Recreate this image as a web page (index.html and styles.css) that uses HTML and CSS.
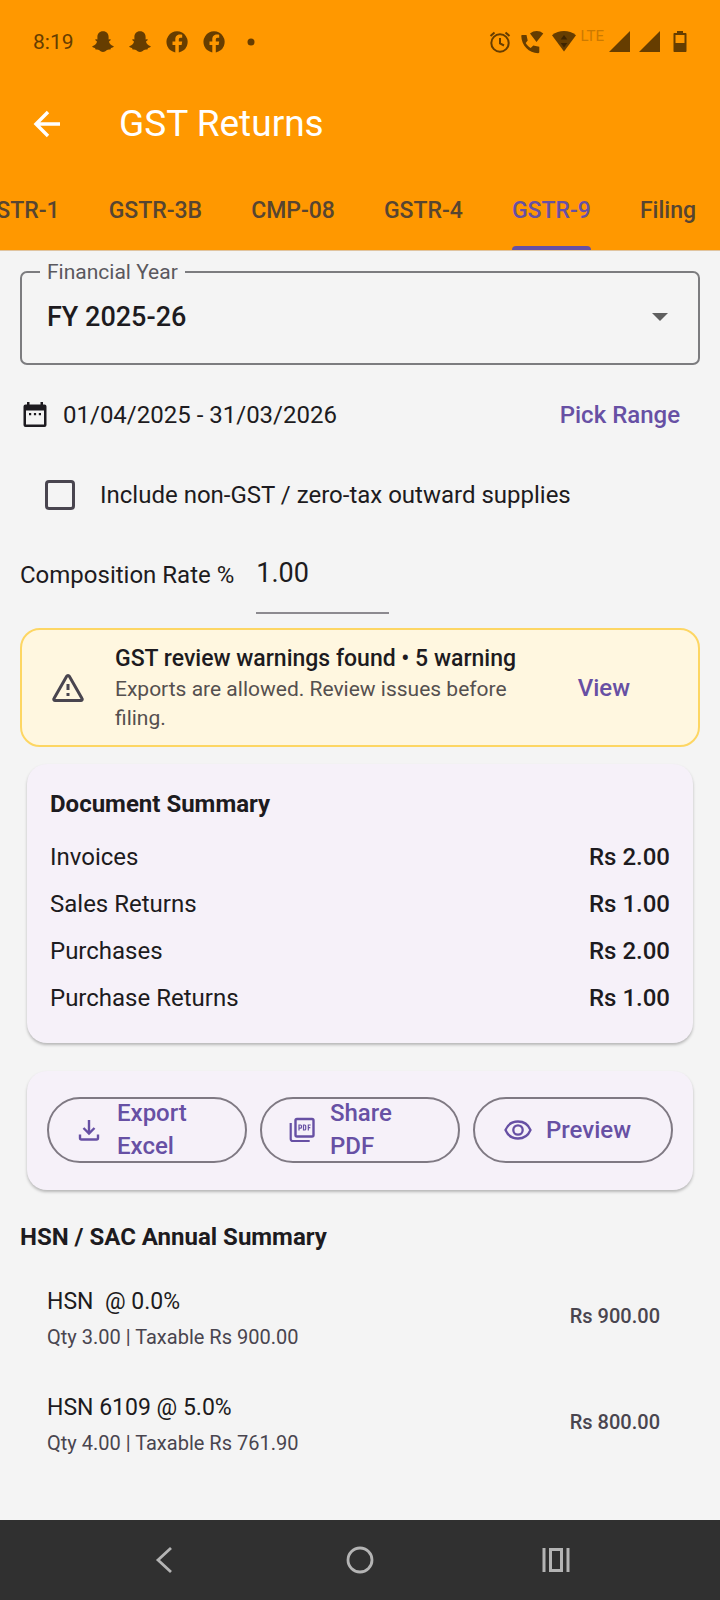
FILE: index.html
```html
<!DOCTYPE html>
<html lang="en">
<head>
<meta charset="utf-8">
<meta name="viewport" content="width=device-width, initial-scale=1">
<title>GST Returns</title>
<link rel="stylesheet" href="styles.css">
</head>
<body>
<div class="screen">
  <header class="header">
    <div class="status">
      <span class="clock">8:19</span>
      <div class="status-left">
        <svg class="ic24" viewBox="0 0 24 24"><path d="M12 1.200c3.700 0 5.600 2.500 5.600 5.700v2.500c.7.200 1.700-.5 2.100.2.300.9-1.700 1.500-1.700 2.200.5 2.300 2.300 3.700 4.700 4.500.3 1-1.300 1.400-2.700 1.700l-.6 1.500c-1.500-.1-2.700-.2-3.800.7-1.200.9-2.100 1.700-3.600 1.700s-2.400-.8-3.600-1.700c-1.100-.9-2.300-.8-3.800-.7L4 18c-1.400-.3-3-.7-2.700-1.700 2.400-.8 4.200-2.200 4.700-4.500 0-.7-2-1.300-1.700-2.200.4-.7 1.400 0 2.100-.2V6.900C6.400 3.700 8.300 1.200 12 1.200z"/></svg>
        <svg class="ic24" viewBox="0 0 24 24"><path d="M12 1.200c3.700 0 5.600 2.500 5.600 5.700v2.500c.7.200 1.700-.5 2.100.2.300.9-1.700 1.500-1.700 2.200.5 2.300 2.300 3.700 4.700 4.500.3 1-1.300 1.400-2.700 1.700l-.6 1.500c-1.500-.1-2.700-.2-3.800.7-1.200.9-2.100 1.700-3.600 1.700s-2.400-.8-3.600-1.700c-1.100-.9-2.300-.8-3.800-.7L4 18c-1.400-.3-3-.7-2.700-1.700 2.400-.8 4.200-2.200 4.700-4.500 0-.7-2-1.300-1.700-2.200.4-.7 1.400 0 2.100-.2V6.900C6.400 3.700 8.300 1.200 12 1.200z"/></svg>
        <svg class="ic24" viewBox="0 0 24 24"><path d="M10.300 22.400v-7.300H7.500v-3.500h2.800V9.500c0-3.600 2-5 4.600-5 1 0 1.800.1 2.300.2v3h-1.600c-1.400 0-1.800.7-1.800 2v1.900h3.400l-.6 3.500h-2.800v7.300A10.600 10.600 0 1 0 10.300 22.400z"/></svg>
        <svg class="ic24" viewBox="0 0 24 24"><path d="M10.300 22.400v-7.300H7.500v-3.500h2.800V9.500c0-3.600 2-5 4.600-5 1 0 1.800.1 2.300.2v3h-1.600c-1.400 0-1.800.7-1.800 2v1.900h3.400l-.6 3.500h-2.800v7.300A10.600 10.600 0 1 0 10.300 22.400z"/></svg>
        <svg class="ic24" viewBox="0 0 24 24"><circle cx="12" cy="12" r="3.500"/></svg>
      </div>
      <div class="status-right">
        <svg class="ic24" viewBox="0 0 24 24"><g fill="none" stroke="currentColor" stroke-width="2"><circle cx="12" cy="13" r="8.700"/><path d="M12 8v5.500l4 2"/><path d="M2.500 6 6.500 2.500M21.500 6l-4-3.500"/></g></svg>
        <svg class="ic24" viewBox="0 0 24 24"><path d="M2 5h4.500l1.200 5.500L5.700 13c1.200 2.200 2.800 3.800 5 5l2.600-2.500 6 1.200V22c0 .6-.4 1.200-1.200 1.200C9 23.200 1.300 15 1.300 6 1.300 5.300 1.500 5 2 5zM10 3.500C14 .2 19.500.2 23.300 3.500L16.500 12z"/></svg>
        <svg class="ic24" viewBox="0 0 24 24"><path d="M0 5.300C7-.3 17-.3 24 5.300L12 21.500z"/><path class="wifi-arrows" d="M8.700 9.500 12 5l3.300 4.500zM8.700 13h6.600L12 17.500z"/></svg>
        <span class="lte">LTE</span>
        <div class="signals">
          <svg class="ic24" viewBox="0 0 24 24"><path d="M1 22 22 1v21z"/></svg>
          <svg class="ic24" viewBox="0 0 24 24"><path d="M1 22 22 1v21z"/></svg>
          <svg class="ic24 battery" viewBox="0 0 24 24"><path fill-rule="evenodd" d="M9 1h6v2h2.500c.6 0 1 .4 1 1v17c0 .6-.4 1-1 1h-11c-.6 0-1-.4-1-1V4c0-.6.400-1 1-1H9zM7.500 5v8h9V5z"/></svg>
        </div>
      </div>
    </div>
    <div class="appbar">
      <button class="back" aria-label="Back"><svg viewBox="0 0 40 40"><path d="M33 20H9M21 8 9 20l12 12" fill="none" stroke="#fff" stroke-width="3.400"/></svg></button>
      <h1 class="title">GST Returns</h1>
    </div>
    <nav class="tabs">
      <button class="tab">GSTR-1</button>
      <button class="tab">GSTR-3B</button>
      <button class="tab">CMP-08</button>
      <button class="tab">GSTR-4</button>
      <button class="tab tab-active" aria-current="page">GSTR-9</button>
      <button class="tab">Filing</button>
    </nav>
  </header>

  <main class="content">
    <fieldset class="field">
      <legend><label for="fy">Financial Year</label></legend>
      <div class="select-row">
        <select id="fy" class="select"><option>FY 2025-26</option></select>
        <svg class="caret" viewBox="0 0 16 8" aria-hidden="true"><path d="M0 0h16L8 8z"/></svg>
      </div>
    </fieldset>

    <div class="range">
      <svg class="calendar" viewBox="0 0 28 28" aria-hidden="true"><path fill-rule="evenodd" d="M6 1h2.500v2.500h11V1H22v2.500h1.500a2 2 0 0 1 2 2V24a2 2 0 0 1-2 2h-19a2 2 0 0 1-2-2V5.500a2 2 0 0 1 2-2H6zM5 9.500v14h18v-14z"/><path d="M8 12h2.200v2.200H8zM12.900 12h2.200v2.200h-2.200zM17.800 12H20v2.200h-2.200z"/></svg>
      <span class="range-text">01/04/2025 - 31/03/2026</span>
      <button class="link-button">Pick Range</button>
    </div>

    <label class="check"><input type="checkbox" class="checkbox"><span>Include non-GST / zero-tax outward supplies</span></label>

    <div class="rate">
      <label for="rate">Composition Rate %</label>
      <input id="rate" class="rate-input" type="text" inputmode="decimal" value="1.00">
    </div>

    <section class="warning">
      <svg class="warning-icon" viewBox="0 0 32 30" aria-hidden="true"><path d="M14.700 3.200a1.500 1.500 0 0 1 2.600 0L30 25.500a1.300 1.300 0 0 1-1.200 2H3.200A1.300 1.300 0 0 1 2 25.500z" fill="none" stroke="currentColor" stroke-width="3"/><path d="M14.500 11h3v6h-3zM14.500 20h3v3h-3z" fill="currentColor"/></svg>
      <div class="warning-body">
        <p class="warning-title">GST review warnings found • 5 warning</p>
        <p class="warning-text">Exports are allowed. Review issues before filing.</p>
      </div>
      <button class="link-button">View</button>
    </section>

    <section class="card summary">
      <h2 class="heading">Document Summary</h2>
      <dl class="totals">
        <div class="total"><dt>Invoices</dt><dd>Rs 2.00</dd></div>
        <div class="total"><dt>Sales Returns</dt><dd>Rs 1.00</dd></div>
        <div class="total"><dt>Purchases</dt><dd>Rs 2.00</dd></div>
        <div class="total"><dt>Purchase Returns</dt><dd>Rs 1.00</dd></div>
      </dl>
    </section>

    <section class="card actions">
      <button class="pill">
        <svg class="pill-icon" viewBox="0 0 28 28" aria-hidden="true"><path d="M14 4v13M8.500 12l5.500 5.500 5.500-5.500M5 18.500V22a1.500 1.500 0 0 0 1.500 1.500h15A1.500 1.500 0 0 0 23 22v-3.500" fill="none" stroke="currentColor" stroke-width="2.400"/></svg>
        <span>Export Excel</span>
      </button>
      <button class="pill">
        <svg class="pill-icon" viewBox="0 0 28 28" aria-hidden="true"><g fill="none" stroke="currentColor"><rect x="7.500" y="3" width="18" height="17.500" rx="1.500" stroke-width="2.400"/><path d="M2.700 7v16a2 2 0 0 0 2 2h17" stroke-width="2.200"/><path d="M11 14.500V9h1.500a1 1 0 0 1 1 1v1.200a1 1 0 0 1-1 1H11M15.500 9v5h1.200a1 1 0 0 0 1-1v-3a1 1 0 0 0-1-1zM20.300 14.500V9h2.400M20.300 11.700h2" stroke-width="1.200"/></g></svg>
        <span>Share PDF</span>
      </button>
      <button class="pill pill-single">
        <svg class="pill-icon" viewBox="0 0 28 28" aria-hidden="true"><path d="M1.500 14C3.800 8.500 8.600 5.500 14 5.500s10.200 3 12.500 8.500c-2.300 5.500-7.100 8.500-12.500 8.500S3.800 19.500 1.500 14z" fill="none" stroke="currentColor" stroke-width="2.300"/><circle cx="14" cy="14" r="4.700" fill="none" stroke="currentColor" stroke-width="2.300"/></svg>
        <span>Preview</span>
      </button>
    </section>

    <section class="hsn">
      <h2 class="heading">HSN / SAC Annual Summary</h2>
      <ul class="hsn-list">
        <li class="hsn-item">
          <div><p class="hsn-name">HSN&nbsp; @ 0.0%</p><p class="hsn-detail">Qty 3.00 | Taxable Rs 900.00</p></div>
          <span class="hsn-amount">Rs 900.00</span>
        </li>
        <li class="hsn-item">
          <div><p class="hsn-name">HSN 6109 @ 5.0%</p><p class="hsn-detail">Qty 4.00 | Taxable Rs 761.90</p></div>
          <span class="hsn-amount">Rs 800.00</span>
        </li>
      </ul>
    </section>
  </main>

  <nav class="sysnav">
    <button class="sys" aria-label="System back"><svg viewBox="0 0 32 32"><path d="M23 4 10 16l13 12" fill="none" stroke="currentColor" stroke-width="2.800"/></svg></button>
    <button class="sys" aria-label="Home"><svg viewBox="0 0 32 32"><circle cx="16" cy="16" r="12" fill="none" stroke="currentColor" stroke-width="2.800"/></svg></button>
    <button class="sys" aria-label="Recent apps"><svg viewBox="0 0 32 32"><path d="M4 4v24M28 4v24" stroke="currentColor" stroke-width="3"/><rect x="10.500" y="5.500" width="11" height="21" fill="none" stroke="currentColor" stroke-width="3"/></svg></button>
  </nav>
</div>
</body>
</html>
```
FILE: styles.css
```css
*, *::before, *::after { box-sizing: border-box; }
body {
  margin: 0;
  font-family: Roboto, "Liberation Sans", sans-serif;
  font-size: 24px;
  line-height: 32px;
  color: #1d1b20;
  background: #f4f4f4;
}
h1, h2, p, dl, dd, ul { margin: 0; padding: 0; }
ul { list-style: none; }
button, input, select { font: inherit; color: inherit; }
button { border: 0; padding: 0; background: none; }
svg { display: block; flex: none; }

.screen { min-height: 100vh; display: flex; flex-direction: column; }

.header { background: #ff9800; border-bottom: 1px solid #e0c4a0; }
.status {
  display: flex;
  align-items: center;
  height: 84px;
  padding: 0 28px 0 33px;
  color: #663d00;
}
.clock { font-size: 21px; width: 58px; }
.status-left { display: flex; gap: 13px; flex: 1; }
.status-right { display: flex; align-items: center; gap: 8px; }
.ic24 { width: 24px; height: 24px; fill: currentColor; }
.wifi-arrows { fill: #3d2400; }
.lte { font-size: 15px; line-height: 12px; color: #cc7a00; align-self: flex-start; margin-left: -4px; }
.signals { display: flex; gap: 6px; margin-left: -4px; }

.appbar { display: flex; align-items: center; height: 80px; padding: 0 27px; gap: 52px; }
.back, .back svg { width: 40px; height: 40px; }
.title { font-size: 37px; line-height: 48px; font-weight: 400; color: #fff; }

.tabs { display: flex; justify-content: flex-end; gap: 49px; padding-right: 24px; overflow: hidden; }
.tab {
  position: relative;
  flex: none;
  height: 86px;
  padding-top: 8px;
  font-size: 23px;
  font-weight: 500;
  color: #574531;
}
.tab-active { color: #6750a4; }
.tab-active::after {
  content: "";
  position: absolute;
  left: 0;
  right: 0;
  bottom: 0;
  height: 4px;
  border-radius: 4px 4px 0 0;
  background: #6750a4;
}

.content { flex: 1; padding: 10px 20px 24px; }

.field {
  margin: 0;
  padding: 0 24px 0 18px;
  border: 2px solid #7c7c7f;
  border-radius: 7px;
  min-width: 0;
}
.field legend { padding: 0 7px; font-size: 21px; line-height: 22px; color: #5a585e; }
.select-row { display: flex; align-items: center; height: 80px; padding: 0 6px 12px 7px; }
.select {
  flex: 1;
  appearance: none;
  border: 0;
  padding: 0;
  background: none;
  font-size: 27px;
  font-weight: 500;
  line-height: 36px;
}
.caret { width: 16px; height: 8px; fill: #5f5f5f; }

.range { display: flex; align-items: center; height: 80px; margin-top: 10px; padding-right: 20px; }
.calendar { width: 28px; height: 28px; margin: 0 14px 0 1px; fill: #1d1b20; }
.range-text { flex: 1; }
.link-button { font-weight: 500; color: #6750a4; }

.check { display: flex; align-items: center; gap: 25px; height: 80px; padding-left: 25px; }
.checkbox {
  appearance: none;
  width: 30px;
  height: 30px;
  margin: 0;
  border: 3px solid #49454f;
  border-radius: 4px;
}
.checkbox:checked { background: #6750a4; }

.rate { display: flex; align-items: center; gap: 22px; height: 79px; }
.rate-input {
  width: 133px;
  height: 79px;
  padding: 0 0 1px;
  border: 0;
  border-bottom: 2px solid #8c8a8f;
  background: none;
  font-size: 27px;
}

.warning {
  display: flex;
  align-items: center;
  margin-top: 14px;
  padding: 13px 68px 12px 30px;
  border: 2px solid #fdd663;
  border-radius: 20px;
  background: #fff7e0;
}
.warning-icon { width: 32px; height: 30px; margin-right: 31px; color: #49454f; }
.warning-body { flex: 1; min-width: 0; padding-right: 48px; }
.warning-title { font-size: 23px; font-weight: 500; white-space: nowrap; }
.warning-text { font-size: 21px; line-height: 29px; color: #55504f; }

.card {
  margin: 0 7px;
  border-radius: 20px;
  background: #f6f1f9;
  box-shadow: 0 2px 3px rgba(0, 0, 0, 0.25);
}
.heading { font-size: 24px; line-height: 32px; font-weight: 700; }
.summary { margin-top: 17px; padding: 24px 23px 21px; }
.totals { margin-top: 14px; }
.total { display: flex; justify-content: space-between; padding: 7px 0; }
.total dt, .total dd { line-height: 33px; }
.total dd { font-weight: 500; }

.actions {
  display: grid;
  grid-template-columns: repeat(3, 1fr);
  gap: 13px;
  margin-top: 28px;
  padding: 26px 20px 27px;
}
.pill {
  display: flex;
  align-items: center;
  gap: 14px;
  height: 66px;
  padding: 0 26px;
  border: 2px solid #7f7983;
  border-radius: 33px;
  font-weight: 500;
  line-height: 33px;
  text-align: left;
  color: #6750a4;
}
.pill-single { padding-left: 29px; }
.pill-icon { width: 28px; height: 28px; }

.hsn { margin-top: 31px; }
.hsn-list { margin-top: 13px; }
.hsn-item { display: flex; align-items: center; justify-content: space-between; height: 106px; padding: 0 40px 0 27px; }
.hsn-name { font-size: 23px; line-height: 36px; }
.hsn-detail { font-size: 20px; line-height: 34px; color: #49454f; }
.hsn-amount { padding-bottom: 6px; font-size: 20px; font-weight: 500; color: #49454f; }

.sysnav {
  display: flex;
  align-items: center;
  justify-content: space-around;
  height: 80px;
  padding: 0 66px;
  background: #303030;
  color: #b4b4b4;
}
.sys, .sys svg { width: 32px; height: 32px; }
```
